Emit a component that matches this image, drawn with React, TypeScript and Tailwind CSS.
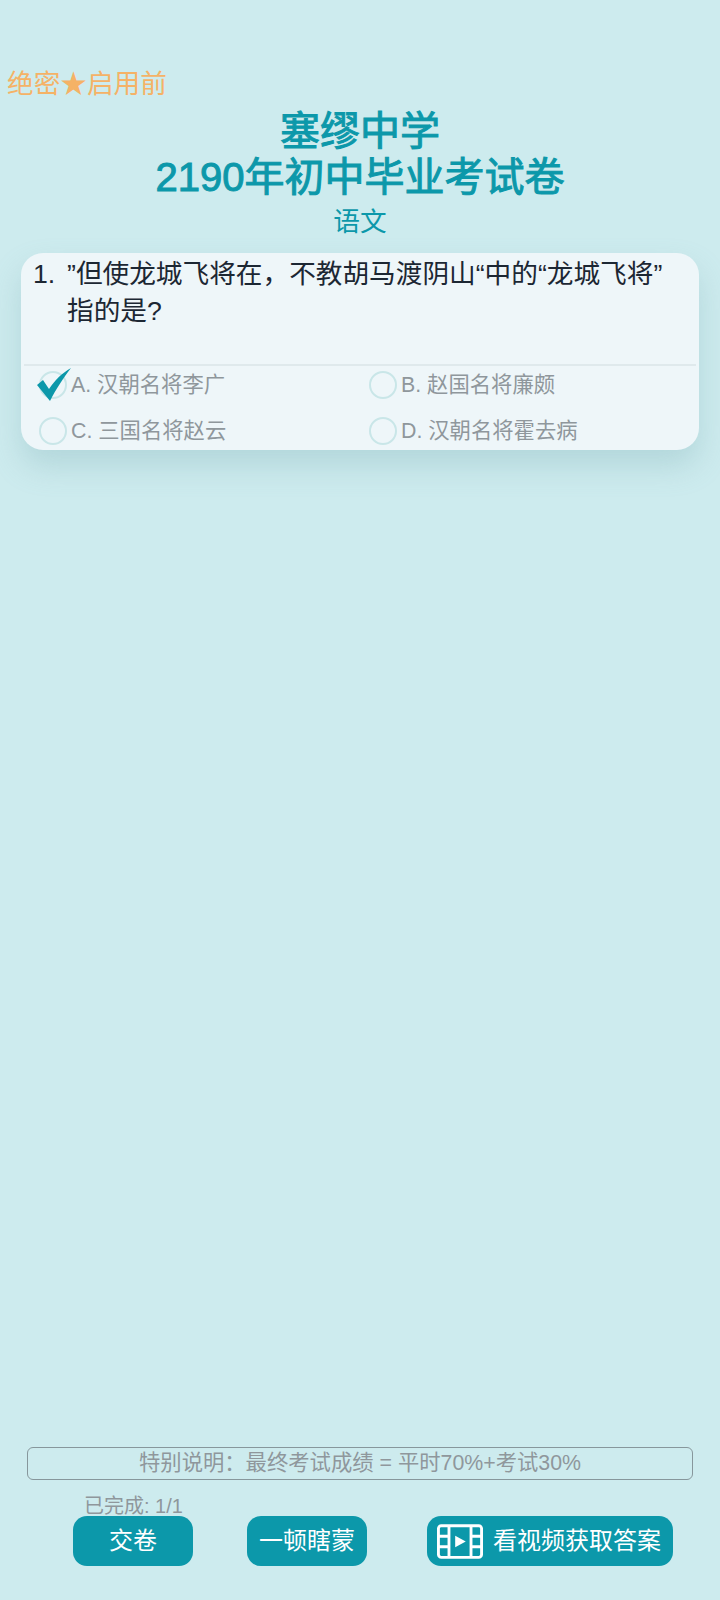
import React from 'react';

const options = [
  { label: 'A. 汉朝名将李广', checked: true },
  { label: 'B. 赵国名将廉颇', checked: false },
  { label: 'C. 三国名将赵云', checked: false },
  { label: 'D. 汉朝名将霍去病', checked: false },
];

function FilmIcon() {
  return (
    <svg width="46" height="35" viewBox="0 0 48 36" fill="none" stroke="white" strokeWidth="3" className="shrink-0">
      <rect x="1.5" y="1.5" width="45" height="33" rx="3" />
      <path d="M12.5 1.5v33M35.5 1.5v33M1.5 12.5h11M1.5 23.5h11M35.5 12.5h11M35.5 23.5h11" />
      <path d="M19 12l11 6-11 6z" fill="white" stroke="none" />
    </svg>
  );
}

function Option({ label, checked }: { label: string; checked: boolean }) {
  return (
    <div className="relative flex h-[46px] items-center">
      <div className="h-7 w-7 shrink-0 rounded-full border-2 border-[#c9e6e8]" />
      <span className="ml-[4px] pt-[2px] text-[21.33px] leading-none text-[#8f979c]">{label}</span>
      {checked && (
        <svg width="36" height="34" viewBox="0 0 36 34" className="absolute left-[-3px] top-[6px]">
          <path d="M1 17l6-5 6 9C19 12 26 5 35 0 28 9 20 21 14 33z" fill="#0c98aa" />
        </svg>
      )}
    </div>
  );
}

export default function App() {
  return (
    <div className="flex h-[1600px] flex-col bg-[#cdebee] font-['Liberation_Sans','Noto_Sans_CJK_SC',sans-serif]">
      <div className="mt-[68px] pl-[7px] text-[26.67px] leading-[32px] text-[#f5b266]">绝密★启用前</div>
      <div className="mt-[8px] text-center text-[40px] leading-[46px] text-[#0c98aa] [-webkit-text-stroke:1px_#0c98aa]">
        <div>塞缪中学</div>
        <div>2190年初中毕业考试卷</div>
      </div>
      <div className="mt-[4px] text-center text-[26.67px] leading-[36px] text-[#0c98aa]">语文</div>

      <div className="mx-[21px] mt-[13px] h-[197px] rounded-[22px] bg-[#eef6f9] shadow-[0_16px_30px_rgba(120,170,175,0.3)]">
        <div className="flex h-[111px] px-[12px] pt-[3px] text-[26.67px] leading-[37px] text-[#1c2733]">
          <span className="w-[34px] shrink-0">1.</span>
          <p>
            ”但使龙城飞将在，不教胡马渡阴山“中的“龙城飞将”
            <br />
            指的是?
          </p>
        </div>
        <div className="mx-[3px] border-t-2 border-[#dfe9ec]" />
        <div className="mt-[-4px] grid grid-cols-2 pl-[18px] pr-[12px]">
          {options.map((o) => (
            <div key={o.label} className={o.label.startsWith('A') || o.label.startsWith('C') ? 'w-[330px]' : 'ml-[6px]'}>
              <Option label={o.label} checked={o.checked} />
            </div>
          ))}
        </div>
      </div>

      <div className="mt-auto px-[27px]">
        <div className="flex h-[33px] items-center justify-center rounded-[6px] border border-[#87979c] text-[21.33px] text-[#8f979c]">
          特别说明：最终考试成绩 = 平时70%+考试30%
        </div>
      </div>
      <div className="relative mb-[34px] mt-[36px] flex pl-[73px]">
        <span className="absolute left-[84px] top-[-23px] text-[20px] leading-[26px] text-[#8f979c]">已完成: 1/1</span>
        <button className="flex h-[50px] w-[120px] items-center justify-center rounded-[14px] bg-[#0c98aa] text-[24px] text-white">交卷</button>
        <button className="ml-[54px] flex h-[50px] w-[120px] items-center justify-center rounded-[14px] bg-[#0c98aa] text-[24px] text-white">一顿瞎蒙</button>
        <button className="ml-[60px] flex h-[50px] w-[246px] items-center justify-center gap-[10px] rounded-[14px] bg-[#0c98aa] pr-[2px] text-[24px] text-white">
          <FilmIcon />
          看视频获取答案
        </button>
      </div>
    </div>
  );
}
